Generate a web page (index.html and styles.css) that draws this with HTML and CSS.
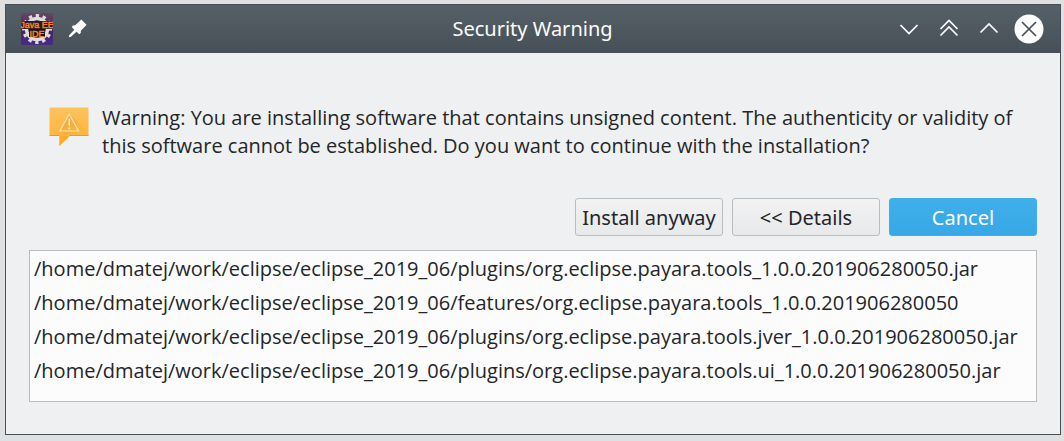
FILE: index.html
```html
<!DOCTYPE html>
<html lang="en">
<head>
<meta charset="utf-8">
<title>Security Warning</title>
<link rel="stylesheet" href="styles.css">
</head>
<body>
<main class="window" role="dialog" aria-labelledby="title" aria-describedby="message">
  <header class="titlebar">
    <div class="title-left">
      <svg class="app-icon" viewBox="0 0 32 32" role="img" aria-label="Java EE IDE">
        <defs>
          <linearGradient id="purple" x1="0" y1="0" x2="0" y2="1"><stop offset="0" stop-color="#6a4468"/><stop offset=".5" stop-color="#43265f"/><stop offset="1" stop-color="#4b2a86"/></linearGradient>
        </defs>
        <rect width="32" height="32" rx="1.5" fill="url(#purple)"/>
        <circle cx="16" cy="16" r="13.5" fill="none" stroke="#dedede" stroke-width="3" stroke-dasharray="3.4 3.669" stroke-dashoffset="1.7"/>
        <circle cx="16" cy="16" r="10.5" fill="#17131a" stroke="#dedede" stroke-width="3.4"/>
        <rect x="1" y="8" width="30" height="8" fill="#2a1a2c"/>
        <rect x="8" y="16" width="16" height="8" fill="#17131a"/>
        <text class="app-text" x="16" y="15">Java EE</text>
        <text class="app-text" x="16" y="24">IDE</text>
      </svg>
      <button class="tool" type="button" aria-label="Keep above others">
        <svg width="20" height="20" viewBox="0 0 20 20"><path d="M13.3.5 18.5 5.7 17.5 7 12.8 11.8 12.8 14 11.3 15.3 8.5 12.7 3 17.8.8 18.2 1.2 16.2 6.3 10.7 3.7 8 5 6.5 7.2 6.3 11.8 2Z" fill="#fcfcfc"/></svg>
      </button>
    </div>
    <h1 class="title" id="title">Security Warning</h1>
    <div class="title-right">
      <button class="tool" type="button" aria-label="Minimize"><svg width="30" height="30" viewBox="0 0 30 30"><path class="line" d="m6.5 11 8.5 8.5 8.5-8.5"/></svg></button>
      <button class="tool" type="button" aria-label="Shade"><svg width="30" height="30" viewBox="0 0 30 30"><path class="line" d="m6.5 15 8.5-8.5 8.5 8.5M6.5 21.5 15 13l8.5 8.5"/></svg></button>
      <button class="tool" type="button" aria-label="Maximize"><svg width="30" height="30" viewBox="0 0 30 30"><path class="line" d="m6.5 18.5 8.5-8.5 8.5 8.5"/></svg></button>
      <button class="tool" type="button" aria-label="Close"><svg width="30" height="30" viewBox="0 0 30 30"><circle cx="15" cy="15" r="14.5" fill="#fcfcfc"/><path class="cross" d="m8 8 14 14M22 8 8 22"/></svg></button>
    </div>
  </header>
  <section class="content">
    <div class="notice">
      <svg class="warn-icon" viewBox="0 0 40 40" role="img" aria-label="Warning">
        <defs>
          <linearGradient id="amber" x1="0" y1="0" x2="0" y2="1"><stop offset="0" stop-color="#fdc35c"/><stop offset="1" stop-color="#fdb135"/></linearGradient>
          <linearGradient id="shade" x1="0" y1="0" x2="1" y2="1"><stop offset="0" stop-color="#c98a2b" stop-opacity=".5"/><stop offset="1" stop-color="#e9a233" stop-opacity="0"/></linearGradient>
        </defs>
        <path d="M.5.5h39V29H20.5L10.5 39V29H.5Z" fill="url(#amber)"/>
        <path d="m20.5 7 18 17.5V28H15l-4-4.5Z" fill="url(#shade)"/>
        <path d="M.5 28.5h10m10 0h19" fill="none" stroke="#e99a24"/>
        <path d="M11 29h9.5L10.5 39V29.5Z" fill="#fbab2c"/>
        <path d="m20.2 7 9.3 17H11Z" fill="none" stroke="#ffe3ac" stroke-width="1.2"/>
        <path d="M20.2 11.5v7.3m0 1.7v2" fill="none" stroke="#ffe3ac" stroke-width="1.6"/>
      </svg>
      <p class="message" id="message">Warning: You are installing software that contains unsigned content. The authenticity or validity of this software cannot be established. Do you want to continue with the installation?</p>
    </div>
    <div class="actions">
      <button class="button" type="button">Install anyway</button>
      <button class="button" type="button">&lt;&lt; Details</button>
      <button class="button primary" type="button">Cancel</button>
    </div>
    <ul class="files">
      <li>/home/dmatej/work/eclipse/eclipse_2019_06/plugins/org.eclipse.payara.tools_1.0.0.201906280050.jar</li>
      <li>/home/dmatej/work/eclipse/eclipse_2019_06/features/org.eclipse.payara.tools_1.0.0.201906280050</li>
      <li>/home/dmatej/work/eclipse/eclipse_2019_06/plugins/org.eclipse.payara.tools.jver_1.0.0.201906280050.jar</li>
      <li>/home/dmatej/work/eclipse/eclipse_2019_06/plugins/org.eclipse.payara.tools.ui_1.0.0.201906280050.jar</li>
    </ul>
  </section>
</main>
</body>
</html>
```
FILE: styles.css
```css
* { box-sizing: border-box; }

body {
  margin: 0;
  padding: 4px 3px 6px 5px;
  background: #e0e0e0;
  color: #232629;
  font: 20px/28px "Noto Sans", sans-serif;
}

.window {
  border: 1px solid #475057;
  background: #eff0f1;
}

.titlebar {
  display: grid;
  grid-template-columns: 1fr auto 1fr;
  align-items: center;
  height: 48px;
  padding: 0 16px 0 15px;
  background: linear-gradient(#566068, #475057);
  color: #fcfcfc;
}

.title-left {
  display: flex;
  align-items: center;
  gap: 15px;
}

.title-right {
  display: flex;
  justify-content: flex-end;
  gap: 10px;
}

.title {
  margin: 0;
  font-size: 20px;
  font-weight: 400;
}

.tool {
  display: flex;
  padding: 0;
  border: 0;
  background: none;
}

.app-icon {
  width: 32px;
  height: 32px;
}

.app-text {
  fill: #f58220;
  stroke: #f58220;
  stroke-width: 0.5;
  font: 9px "Liberation Sans", sans-serif;
  text-anchor: middle;
}

.line {
  fill: none;
  stroke: #fcfcfc;
  stroke-width: 1.75;
}

.cross {
  fill: none;
  stroke: #475057;
  stroke-width: 1.75;
}

.content {
  padding: 51px 23px 32px;
}

.notice {
  display: flex;
  align-items: flex-start;
  gap: 13px;
  padding: 0 20px;
}

.warn-icon {
  flex: none;
  width: 40px;
  height: 40px;
  margin-top: 3px;
}

.message,
.files {
  font-family: "Open Sans", "Noto Sans", sans-serif;
}

.message {
  margin: 0;
}

.actions {
  display: flex;
  justify-content: flex-end;
  gap: 9px;
  margin-top: 38px;
}

.button {
  width: 148px;
  height: 38px;
  padding: 1px 0 0;
  border: 1px solid #babcbe;
  border-radius: 3px;
  background: linear-gradient(#f2f2f3, #e8e9ea);
  color: inherit;
  font: inherit;
}

.primary {
  border-color: #3daee9;
  background: linear-gradient(#40afea, #37a8e6);
  color: #fcfcfc;
}

.files {
  margin: 14px 0 0;
  padding: 1px 4px 13px;
  border: 1px solid #babcbe;
  background: #fcfcfc;
  line-height: 34px;
  list-style: none;
}
```
